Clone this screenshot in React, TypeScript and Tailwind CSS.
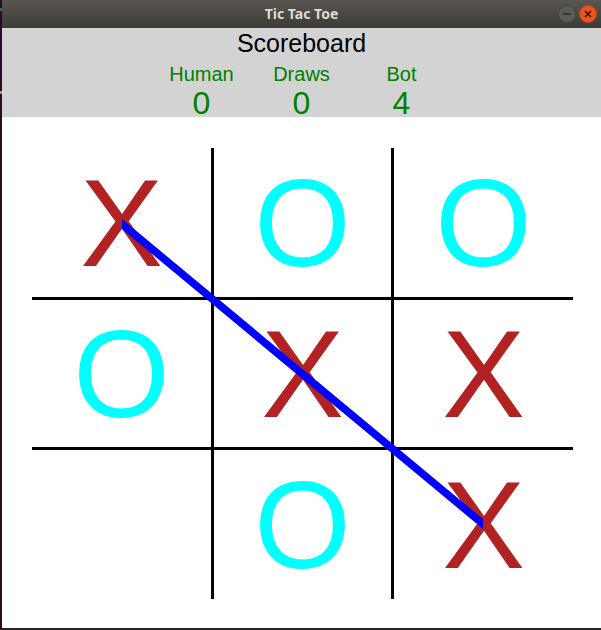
import React from "react";

const board: string[][] = [
  ["X", "O", "O"],
  ["O", "X", "X"],
  ["", "O", "X"],
];

function Cell({ v, r, c }: { v: string; r: number; c: number }) {
  const right = c < 2 ? "border-r-[3px]" : "";
  const bottom = r < 2 ? "border-b-[3px]" : "";
  const color = v === "X" ? "text-[#b22222]" : "text-[#00ffff]";
  return (
    <div className={`flex items-center justify-center border-black ${right} ${bottom}`}>
      <span className={`text-[124px] leading-none ${color}`}>{v}</span>
    </div>
  );
}

export default function App() {
  return (
    <div
      className="w-[601px] h-[630px] flex overflow-hidden bg-[#2c0b22]"
      style={{ fontFamily: '"Liberation Sans", Arial, sans-serif' }}
    >
      <div className="w-[2px] h-full bg-[#2a0a20] flex flex-col">
        <div className="h-[8px] bg-[#2a0a20]" />
        <div className="h-[3px] bg-[#0f7a7a]" />
        <div className="h-[80px]" />
        <div className="h-[3px] bg-[#c98a4a]" />
      </div>
      <div className="flex-1 flex flex-col">
        {/* title bar */}
        <div className="h-[28px] grid grid-cols-[1fr_auto_1fr] items-center bg-linear-to-b from-[#5a5650] to-[#3c3b37]">
          <div />
          <div
            className="text-[14px] font-bold text-[#dfdbd2] leading-none"
            style={{ fontFamily: '"Noto Sans", "DejaVu Sans", sans-serif' }}
          >
            Tic Tac Toe
          </div>
          <div className="flex justify-end items-center gap-[3px] pr-[4px]">
            <div className="w-[18px] h-[18px] rounded-full bg-[#5b5b59] border border-[#444440] flex items-center justify-center">
              <div className="w-[8px] h-[2px] bg-[#333331]" />
            </div>
            <div className="w-[18px] h-[18px] rounded-full bg-[#e9541f] border border-[#c8461a] flex items-center justify-center">
              <svg width="8" height="8" viewBox="0 0 8 8">
                <path d="M1 1 L7 7 M7 1 L1 7" stroke="#3a1506" strokeWidth="1.6" />
              </svg>
            </div>
          </div>
        </div>

        {/* scoreboard */}
        <div className="h-[89px] bg-[#d3d3d3] flex flex-col items-center">
          <div className="text-[25px] leading-[30px] text-black">Scoreboard</div>
          <div className="flex mt-[5px]">
            {[
              ["Human", "0"],
              ["Draws", "0"],
              ["Bot", "4"],
            ].map(([label, n]) => (
              <div key={label} className="w-[100px] flex flex-col items-center text-[#008000]">
                <div className="text-[20px] leading-[22px]">{label}</div>
                <div className="text-[32px] leading-[28px] mt-[4px]">{n}</div>
              </div>
            ))}
          </div>
        </div>

        {/* canvas */}
        <div className="h-[511px] bg-white pl-[30px] pt-[31px]">
          <div className="relative w-[541px] h-[451px] grid grid-cols-[182px_180px_179px] grid-rows-[152px_150px_149px]">
            {board.map((row, r) =>
              row.map((v, c) => <Cell key={`${r}-${c}`} v={v} r={r} c={c} />)
            )}
            <svg
              className="absolute left-0 top-0 pointer-events-none"
              width="541"
              height="451"
              viewBox="0 0 541 451"
            >
              <polygon points="90,71 451,371 451,381 90,81" fill="#0000ff" />
            </svg>
          </div>
        </div>
        <div className="h-[2px] bg-[#262626]" />
      </div>
    </div>
  );
}
